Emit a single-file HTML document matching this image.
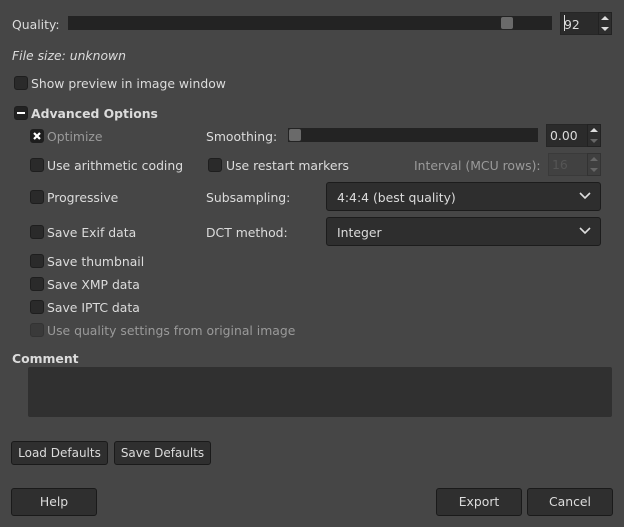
<!DOCTYPE html>
<html><head><style>
body{margin:0;width:624px;height:527px;background:#464646;font-family:"DejaVu Sans","Liberation Sans",sans-serif;font-size:12.4px;color:#dcdcdc;position:relative;overflow:hidden}
.a{position:absolute;white-space:nowrap;line-height:16px;margin-top:2px}
.cb{position:absolute;width:12px;height:12px;background:#2a2a2a;border:1px solid #1e1e1e;border-radius:3px}
.track{position:absolute;background:#232323;height:14px}
.h{position:absolute;background:#6a6a6a;border-radius:2px}
.entry{position:absolute;background:#2b2b2b;border:1px solid #262626}
.sp{position:absolute;width:12px;background:#2e2e2e;border:1px solid #222}
.combo{position:absolute;background:#2e2e2e;border:1px solid #1c1c1c;border-radius:3px;height:27px}
.btn{position:absolute;background:#2f2f2f;border:1px solid #1a1a1a;border-radius:3px;text-align:center;box-sizing:border-box;white-space:nowrap}
.g{color:#9a9a9a}
</style></head><body>
<div class="a" style="left:12px;top:15px">Quality:</div>
<div class="track" style="left:68px;top:16px;width:484px"></div>
<div class="h" style="left:501px;top:17px;width:12px;height:12px"></div>
<div class="entry" style="left:560px;top:12px;width:38px;height:21px"></div>
<div class="a" style="left:564px;top:15px">92</div>
<div style="position:absolute;left:564px;top:15px;width:1px;height:16px;background:#ddd"></div>
<div class="sp" style="left:598px;top:12px;height:21px"></div>
<svg style="position:absolute;left:598px;top:12px" width="14" height="23"><path d="M3 8l4-4 4 4z" fill="#ddd"/><path d="M3 15l4 4 4-4z" fill="#ddd"/></svg>
<div class="a" style="left:12px;top:46px;font-style:italic">File size: unknown</div>
<div class="cb" style="left:14px;top:76px"></div>
<div class="a" style="left:31px;top:74px">Show preview in image window</div>
<div class="cb" style="left:14px;top:106px;background:#222"></div>
<div style="position:absolute;left:17px;top:112px;width:8px;height:2px;background:#fff"></div>
<div class="a" style="left:31px;top:104px;font-weight:bold">Advanced Options</div>
<div class="cb" style="left:30px;top:129px;background:#1e1e1e"></div>
<svg style="position:absolute;left:31px;top:130px" width="12" height="12"><path d="M3 3l6 6M9 3l-6 6" stroke="#fff" stroke-width="2.2"/></svg>
<div class="a g" style="left:47px;top:127px">Optimize</div>
<div class="a" style="left:206px;top:127px">Smoothing:</div>
<div class="track" style="left:288px;top:128px;width:250px"></div>
<div class="h" style="left:289px;top:129px;width:12px;height:12px"></div>
<div class="entry" style="left:546px;top:124px;width:40px;height:21px"></div>
<div class="a" style="left:550px;top:126px">0.00</div>
<div class="sp" style="left:587px;top:124px;height:21px"></div>
<svg style="position:absolute;left:587px;top:124px" width="14" height="23"><path d="M3 8l4-4 4 4z" fill="#ddd"/><path d="M3 15l4 4 4-4z" fill="#666"/></svg>
<div class="cb" style="left:30px;top:158px"></div>
<div class="a" style="left:47px;top:156px">Use arithmetic coding</div>
<div class="cb" style="left:208px;top:158px"></div>
<div class="a" style="left:226px;top:156px">Use restart markers</div>
<div class="a g" style="left:414px;top:156px">Interval (MCU rows):</div>
<div class="entry" style="left:548px;top:153px;width:38px;height:21px;background:#414141;border-color:#3a3a3a"></div>
<div class="a" style="left:552px;top:155px;color:#555">16</div>
<div class="sp" style="left:587px;top:153px;height:21px;background:#3f3f3f;border-color:#333"></div>
<svg style="position:absolute;left:587px;top:153px" width="14" height="23"><path d="M3 8l4-4 4 4z" fill="#666"/><path d="M3 15l4 4 4-4z" fill="#666"/></svg>
<div class="cb" style="left:30px;top:190px"></div>
<div class="a" style="left:47px;top:188px">Progressive</div>
<div class="a" style="left:206px;top:188px">Subsampling:</div>
<div class="combo" style="left:326px;top:182px;width:273px"></div>
<div class="a" style="left:337px;top:188px">4:4:4 (best quality)</div>
<svg style="position:absolute;left:578px;top:191px" width="14" height="10"><path d="M2 2l5 5 5-5" stroke="#ddd" stroke-width="1.6" fill="none"/></svg>
<div class="cb" style="left:30px;top:225px"></div>
<div class="a" style="left:47px;top:223px">Save Exif data</div>
<div class="a" style="left:206px;top:223px">DCT method:</div>
<div class="combo" style="left:326px;top:217px;width:273px"></div>
<div class="a" style="left:337px;top:223px">Integer</div>
<svg style="position:absolute;left:578px;top:226px" width="14" height="10"><path d="M2 2l5 5 5-5" stroke="#ddd" stroke-width="1.6" fill="none"/></svg>
<div class="cb" style="left:30px;top:254px"></div>
<div class="a" style="left:47px;top:252px">Save thumbnail</div>
<div class="cb" style="left:30px;top:277px"></div>
<div class="a" style="left:47px;top:275px">Save XMP data</div>
<div class="cb" style="left:30px;top:300px"></div>
<div class="a" style="left:47px;top:298px">Save IPTC data</div>
<div class="cb" style="left:30px;top:323px;background:#3a3a3a;border-color:#333"></div>
<div class="a g" style="left:47px;top:321px">Use quality settings from original image</div>
<div class="a" style="left:12px;top:349px;font-weight:bold">Comment</div>
<div style="position:absolute;left:28px;top:367px;width:584px;height:50px;background:#303030;border-radius:2px"></div>
<div class="btn" style="left:11px;top:441px;width:97px;height:24px;line-height:22px;font-size:12px">Load Defaults</div>
<div class="btn" style="left:114px;top:441px;width:97px;height:24px;line-height:22px;font-size:12px">Save Defaults</div>
<div class="btn" style="left:11px;top:488px;width:86px;height:28px;line-height:26px">Help</div>
<div class="btn" style="left:436px;top:488px;width:86px;height:28px;line-height:26px">Export</div>
<div class="btn" style="left:527px;top:488px;width:86px;height:28px;line-height:26px">Cancel</div>
</body></html>
